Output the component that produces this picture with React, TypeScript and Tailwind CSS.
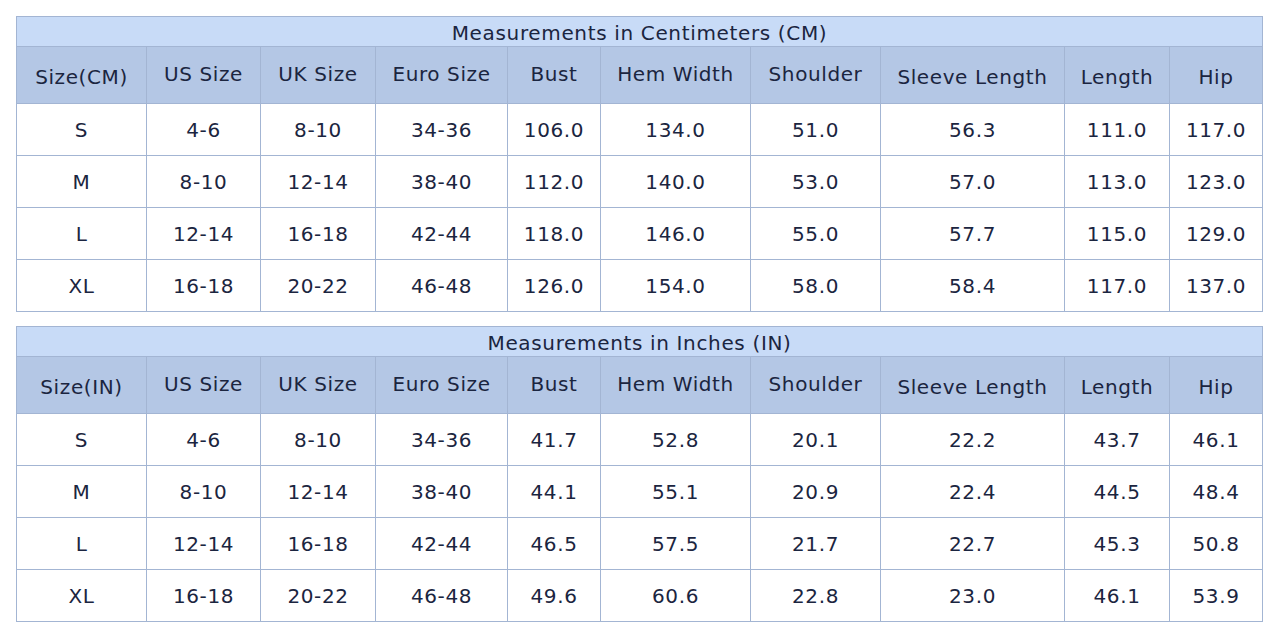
const cols = [130, 114, 115, 132, 93, 150, 130, 184, 105, 93]

const headers = ['US Size', 'UK Size', 'Euro Size', 'Bust', 'Hem Width', 'Shoulder', 'Sleeve Length', 'Length', 'Hip']
// some header labels sit a little higher than the others
const raised = [true, true, true, true, true, true, false, false, false]

const sizes = [
  ['S', '4-6', '8-10', '34-36'],
  ['M', '8-10', '12-14', '38-40'],
  ['L', '12-14', '16-18', '42-44'],
  ['XL', '16-18', '20-22', '46-48'],
]

const cm = [
  ['106.0', '134.0', '51.0', '56.3', '111.0', '117.0'],
  ['112.0', '140.0', '53.0', '57.0', '113.0', '123.0'],
  ['118.0', '146.0', '55.0', '57.7', '115.0', '129.0'],
  ['126.0', '154.0', '58.0', '58.4', '117.0', '137.0'],
]

const inch = [
  ['41.7', '52.8', '20.1', '22.2', '43.7', '46.1'],
  ['44.1', '55.1', '20.9', '22.4', '44.5', '48.4'],
  ['46.5', '57.5', '21.7', '22.7', '45.3', '50.8'],
  ['49.6', '60.6', '22.8', '23.0', '46.1', '53.9'],
]

function SizeTable({ title, unit, data }: { title: string; unit: string; data: string[][] }) {
  return (
    <table className="table-fixed border-collapse w-[1247px] text-[20px] tracking-[0.6px] text-[#1b2540]">
      <colgroup>
        {cols.map((w, i) => (
          <col key={i} style={{ width: w }} />
        ))}
      </colgroup>
      <tbody>
        <tr className="h-[30px] bg-[#c8dbf7]">
          <td colSpan={10} className="border border-[#a3b5d3] text-center leading-none p-0 pt-[3px] text-[20px] tracking-[0.65px]">
            {title}
          </td>
        </tr>
        <tr className="h-[57px] bg-[#b4c7e5]">
          <td className="border border-[#a3b5d3] text-center p-0 pt-[3px]">Size({unit})</td>
          {headers.map((h, i) => (
            <td
              key={h}
              className={
                raised[i]
                  ? 'border border-[#a3b5d3] text-center p-0 pb-[3px]'
                  : 'border border-[#a3b5d3] text-center p-0 pt-[3px]'
              }
            >
              {h}
            </td>
          ))}
        </tr>
        {sizes.map((s, r) => (
          <tr key={s[0]} className="h-[52px] bg-white">
            {[...s, ...data[r]].map((v, i) => (
              <td key={i} className="border border-[#a3b5d3] text-center p-0">
                {v}
              </td>
            ))}
          </tr>
        ))}
      </tbody>
    </table>
  )
}

export default function App() {
  return (
    <div className="bg-white w-[1278px] h-[642px] pt-4 pl-4 flex flex-col gap-[14px] font-['DejaVu_Sans','Verdana',sans-serif]">
      <SizeTable title="Measurements in Centimeters (CM)" unit="CM" data={cm} />
      <SizeTable title="Measurements in Inches (IN)" unit="IN" data={inch} />
    </div>
  )
}
